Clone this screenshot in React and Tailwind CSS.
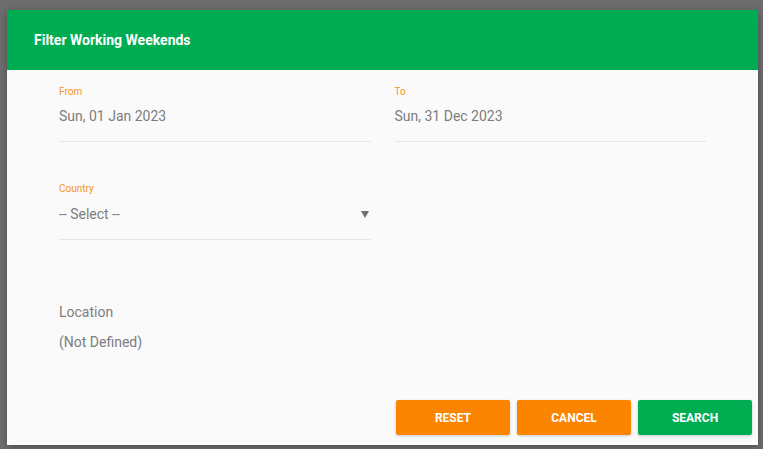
import React from "react";

function Field({ label, value, arrow, labelGap }) {
  return (
    <div className="flex flex-col border-b border-[#e6e6e6] pb-[15px]">
      <div className="text-[10px] leading-[14px] text-[#f7941d]">{label}</div>
      <div className={`flex items-center justify-between text-[14px] leading-[20px] text-[#7d7d7d] ${labelGap}`}>
        <span>{value}</span>
        {arrow && (
          <svg width="8" height="8" viewBox="0 0 8 8" className="mr-[2px]">
            <path d="M0 1 L8 1 L4 8 Z" fill="#6f6f6f" />
          </svg>
        )}
      </div>
    </div>
  );
}

export default function App() {
  return (
    <div
      className="h-[449px] w-[763px] overflow-hidden bg-[#6d6d6d] pt-[10px] pl-[7px]"
      style={{ fontFamily: "Roboto, 'Liberation Sans', sans-serif" }}
    >
      <div className="flex h-[435px] w-[751px] flex-col bg-[#fafafa] shadow-[0_2px_8px_rgba(0,0,0,0.3)]">
        <div className="flex h-[60px] items-center bg-[#00ac51] pl-[27px] text-[14px] font-bold text-white">
          Filter Working Weekends
        </div>
        <div className="flex flex-1 flex-col pl-[52px] pt-[15px]">
          <div className="grid w-[647px] grid-cols-2 gap-x-[24px]">
            <Field label="From" value="Sun, 01 Jan 2023" labelGap="mt-[7px]" />
            <Field label="To" value="Sun, 31 Dec 2023" labelGap="mt-[7px]" />
          </div>
          <div className="mt-[40px] w-[312px]">
            <Field label="Country" value="-- Select --" arrow labelGap="mt-[8px]" />
          </div>
          <div className="mt-[62px] text-[14px] leading-[20px] text-[#7d7d7d]">Location</div>
          <div className="mt-[10px] text-[14px] leading-[20px] text-[#7d7d7d]">(Not Defined)</div>
        </div>
        <div className="flex justify-end gap-[7px] pb-[10px] pr-[6px]">
          <button className="h-[35px] w-[114px] rounded-[2px] bg-[#fb8500] text-[12px] font-bold text-white shadow-[0_1px_3px_rgba(0,0,0,0.2)]">
            RESET
          </button>
          <button className="h-[35px] w-[114px] rounded-[2px] bg-[#fb8500] text-[12px] font-bold text-white shadow-[0_1px_3px_rgba(0,0,0,0.2)]">
            CANCEL
          </button>
          <button className="h-[35px] w-[114px] rounded-[2px] bg-[#00ad50] text-[12px] font-bold text-white shadow-[0_1px_3px_rgba(0,0,0,0.2)]">
            SEARCH
          </button>
        </div>
      </div>
    </div>
  );
}
